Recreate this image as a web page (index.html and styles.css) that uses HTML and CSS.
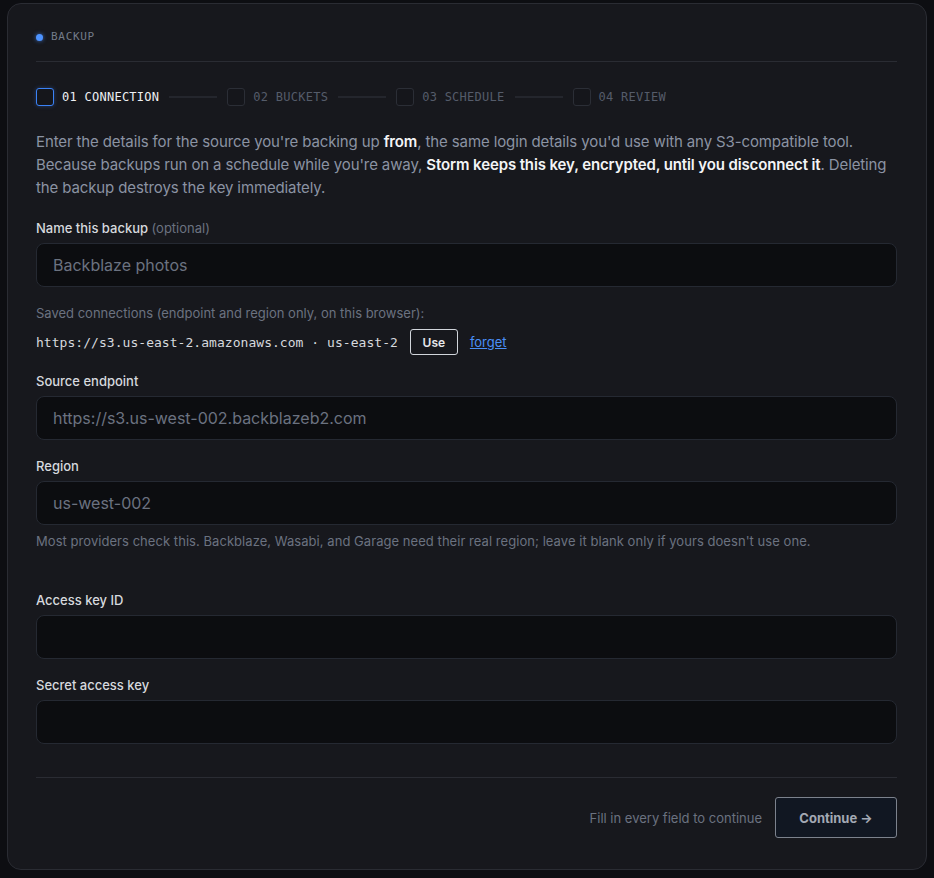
FILE: index.html
```html
<!DOCTYPE html>
<html lang="en">
<head>
    <meta charset="UTF-8">
    <meta name="viewport" content="width=device-width, initial-scale=1.0">
    <title>Backup</title>
    <link rel="stylesheet" href="styles.css">
</head>
<body>
    <div class="card">
        <div class="card-head">
            <span class="dot"></span>
            <span class="eyebrow">BACKUP</span>
        </div>

        <ol class="steps">
            <li class="step active"><span class="box"></span><span class="step-name">01 CONNECTION</span></li>
            <li class="rule"></li>
            <li class="step"><span class="box"></span><span class="step-name">02 BUCKETS</span></li>
            <li class="rule"></li>
            <li class="step"><span class="box"></span><span class="step-name">03 SCHEDULE</span></li>
            <li class="rule"></li>
            <li class="step"><span class="box"></span><span class="step-name">04 REVIEW</span></li>
        </ol>

        <p class="intro">Enter the details for the source you're backing up <strong>from</strong>, the same login details you'd use with any S3-compatible tool. Because backups run on a schedule while you're away, <strong>Storm keeps this key, encrypted, until you disconnect it</strong>. Deleting the backup destroys the key immediately.</p>

        <div class="field">
            <label class="label">Name this backup <span class="muted">(optional)</span></label>
            <input class="input" type="text" placeholder="Backblaze photos">
        </div>

        <div class="saved">
            <div class="saved-title">Saved connections (endpoint and region only, on this browser):</div>
            <div class="saved-row">
                <span class="mono">https://s3.us-east-2.amazonaws.com · us-east-2</span>
                <button class="btn-small">Use</button>
                <a href="#" class="link">forget</a>
            </div>
        </div>

        <div class="field">
            <label class="label">Source endpoint</label>
            <input class="input" type="text" placeholder="https://s3.us-west-002.backblazeb2.com">
        </div>

        <div class="field">
            <label class="label">Region</label>
            <input class="input" type="text" placeholder="us-west-002">
            <div class="help">Most providers check this. Backblaze, Wasabi, and Garage need their real region; leave it blank only if yours doesn't use one.</div>
        </div>

        <div class="field spaced">
            <label class="label">Access key ID</label>
            <input class="input" type="text">
        </div>

        <div class="field">
            <label class="label">Secret access key</label>
            <input class="input" type="password">
        </div>

        <div class="card-foot">
            <span class="hint">Fill in every field to continue</span>
            <button class="btn-next">Continue &rarr;</button>
        </div>
    </div>
</body>
</html>
```

FILE: styles.css
```css
* {
    margin: 0;
    padding: 0;
    box-sizing: border-box;
}

body {
    background: #0d0e12;
    font-family: Inter, "Noto Sans", sans-serif;
    color: #d1d5db;
    padding: 3px 7px 0;
}

.card {
    width: 920px;
    background: #17181d;
    border: 1px solid #2a2c33;
    border-radius: 14px;
    padding: 26px 29px 31px 28px;
}

.card-head {
    display: flex;
    align-items: center;
    gap: 8px;
    height: 14px;
    padding-bottom: 17px;
    box-sizing: content-box;
    border-bottom: 1px solid #2a2c33;
}

.dot {
    width: 7px;
    height: 7px;
    border-radius: 50%;
    background: #4d93ff;
    box-shadow: 0 0 4px rgba(77, 147, 255, 0.7);
}

.eyebrow {
    font-family: "DejaVu Sans Mono", monospace;
    font-size: 11px;
    line-height: 14px;
    letter-spacing: 0.7px;
    color: #737b89;
}

.steps {
    list-style: none;
    display: flex;
    align-items: center;
    margin-top: 26px;
    height: 18px;
}

.step {
    display: flex;
    align-items: center;
    gap: 8px;
}

.box {
    width: 18px;
    height: 18px;
    border: 1px solid #2b2e36;
    border-radius: 3px;
    background: #15161b;
}

.step-name {
    font-family: "DejaVu Sans Mono", monospace;
    font-size: 12px;
    letter-spacing: 0.26px;
    color: #555c6a;
}

.step.active .box {
    border-color: #3b82f6;
    box-shadow: 0 0 4px rgba(59, 130, 246, 0.35);
}

.step.active .step-name {
    color: #eef0f3;
}

.rule {
    width: 48px;
    height: 2px;
    background: #24262d;
    margin: 0 10px;
}

.intro {
    margin-top: 24px;
    font-size: 15px;
    line-height: 23px;
    letter-spacing: -0.12px;
    color: #8b93a3;
}

.intro strong {
    color: #f3f4f6;
    font-weight: 600;
}

.field {
    margin-top: 20px;
}

.field + .field,
.saved + .field {
    margin-top: 17px;
}

.field.spaced {
    margin-top: 41px;
}

.label {
    display: block;
    font-size: 13px;
    line-height: 18px;
    font-weight: 500;
    color: #d6d9de;
    margin-bottom: 6px;
}

.muted {
    color: #6b7280;
    font-weight: 400;
}

.input {
    display: block;
    width: 100%;
    height: 44px;
    background: #0c0d10;
    border: 1px solid #252932;
    border-radius: 8px;
    padding: 0 16px;
    font-family: Inter, "Noto Sans", sans-serif;
    font-size: 16px;
    color: #e5e7eb;
    outline: none;
}

.input::placeholder {
    color: #6b7280;
}

.help {
    margin-top: 7px;
    font-size: 13px;
    line-height: 18px;
    letter-spacing: 0.05px;
    color: #6b7280;
}

.saved {
    margin-top: 17px;
}

.saved-title {
    font-size: 13px;
    line-height: 18px;
    color: #6b7280;
}

.saved-row {
    display: flex;
    align-items: center;
    gap: 12px;
    margin-top: 7px;
    height: 26px;
}

.mono {
    font-family: "DejaVu Sans Mono", monospace;
    font-size: 13px;
    letter-spacing: 0.04px;
    color: #d6d9de;
}

.btn-small {
    width: 48px;
    height: 26px;
    background: transparent;
    border: 1px solid #d1d5db;
    border-radius: 3px;
    font-family: Inter, "Noto Sans", sans-serif;
    font-size: 12px;
    font-weight: 600;
    color: #e5e7eb;
}

.link {
    font-size: 13px;
    color: #4a8ff7;
    text-decoration: underline;
}

.card-foot {
    margin-top: 33px;
    border-top: 1px solid #2a2c33;
    padding-top: 19px;
    display: flex;
    align-items: center;
    justify-content: flex-end;
    gap: 13px;
}

.hint {
    font-size: 13px;
    color: #6b7280;
}

.btn-next {
    width: 122px;
    height: 41px;
    background: #111722;
    border: 1px solid #7c828d;
    border-radius: 3px;
    font-family: Inter, "Noto Sans", sans-serif;
    font-size: 13px;
    font-weight: 700;
    color: #a3a9b4;
}
```
